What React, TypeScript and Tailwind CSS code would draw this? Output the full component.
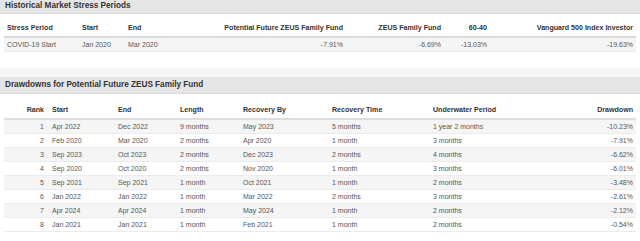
import React from "react";

const stress = [["COVID-19 Start", "Jan 2020", "Mar 2020", "-7.91%", "-6.69%", "-13.03%", "-19.63%"]];

const dd = [
  ["1", "Apr 2022", "Dec 2022", "9 months", "May 2023", "5 months", "1 year 2 months", "-10.23%"],
  ["2", "Feb 2020", "Mar 2020", "2 months", "Apr 2020", "1 month", "3 months", "-7.91%"],
  ["3", "Sep 2023", "Oct 2023", "2 months", "Dec 2023", "2 months", "4 months", "-6.62%"],
  ["4", "Sep 2020", "Oct 2020", "2 months", "Nov 2020", "1 month", "3 months", "-6.01%"],
  ["5", "Sep 2021", "Sep 2021", "1 month", "Oct 2021", "1 month", "2 months", "-3.48%"],
  ["6", "Jan 2022", "Jan 2022", "1 month", "Mar 2022", "2 months", "3 months", "-2.61%"],
  ["7", "Apr 2024", "Apr 2024", "1 month", "May 2024", "1 month", "2 months", "-2.12%"],
  ["8", "Jan 2021", "Jan 2021", "1 month", "Feb 2021", "1 month", "2 months", "-0.54%"],
];

const topCols = "grid-cols-[75px_46px_95px_126px_98px_46px_146px]";
const topAlign = ["text-left", "text-left", "text-left", "text-right", "text-right", "text-right", "text-right"];
const botCols = "grid-cols-[45px_66px_62px_63px_89px_101px_106px_100px]";
const botAlign = ["text-right pr-[5px]", "text-left", "text-left", "text-left", "text-left", "text-left", "text-left", "text-right"];

export default function App() {
  return (
    <div className="w-[640px] h-[241px] overflow-hidden bg-white text-[#555]" style={{ fontFamily: '"Liberation Sans", Arial, sans-serif' }}>
      {/* Panel 1 */}
      <div className="bg-white">
        <div className="h-[14px] bg-[#e5e5e5] border-b border-[#d9d9d9] flex items-center pl-[5px] text-[8.2px] font-bold text-[#333] leading-none">
          Historical Market Stress Periods
        </div>
        <div className="px-[4px] pt-[8px] pb-[16px]">
          <div className={`grid ${topCols} h-[16px] items-center border-b-2 border-[#dcdcdc] text-[7.1px] font-bold text-[#333] leading-none`}>
            {["Stress Period", "Start", "End", "Potential Future ZEUS Family Fund", "ZEUS Family Fund", "60-40", "Vanguard 500 Index Investor"].map((h, i) => (
              <div key={i} className={`px-[3px] whitespace-nowrap ${topAlign[i]}`}>{h}</div>
            ))}
          </div>
          {stress.map((r, ri) => (
            <div key={ri} className={`grid ${topCols} h-[14px] items-center bg-[#f5f5f5] border-b border-[#ebebeb] text-[7px] leading-none`}>
              {r.map((c, i) => (
                <div key={i} className={`px-[3px] whitespace-nowrap ${topAlign[i]}`}>{c}</div>
              ))}
            </div>
          ))}
        </div>
      </div>
      {/* gap */}
      <div className="h-[9px] bg-[#f6f7f9]" />
      {/* Panel 2 */}
      <div className="bg-white">
        <div className="h-[17px] bg-[#e5e5e5] border-b border-[#d9d9d9] flex items-center pl-[5px] text-[8.2px] font-bold text-[#333] leading-none">
          Drawdowns for Potential Future ZEUS Family Fund
        </div>
        <div className="px-[4px] pt-[10px]">
          <div className={`grid ${botCols} h-[16px] items-center border-b-2 border-[#dcdcdc] text-[7.1px] font-bold text-[#333] leading-none`}>
            {["Rank", "Start", "End", "Length", "Recovery By", "Recovery Time", "Underwater Period", "Drawdown"].map((h, i) => (
              <div key={i} className={`px-[3px] whitespace-nowrap ${botAlign[i]}`}>{h}</div>
            ))}
          </div>
          {dd.map((r, ri) => (
            <div key={ri} className={`grid ${botCols} h-[14px] items-center border-b border-[#ebebeb] text-[7px] leading-none ${ri % 2 === 0 ? "bg-[#f5f5f5]" : "bg-white"}`}>
              {r.map((c, i) => (
                <div key={i} className={`px-[3px] whitespace-nowrap ${botAlign[i]}`}>{c}</div>
              ))}
            </div>
          ))}
        </div>
      </div>
    </div>
  );
}
